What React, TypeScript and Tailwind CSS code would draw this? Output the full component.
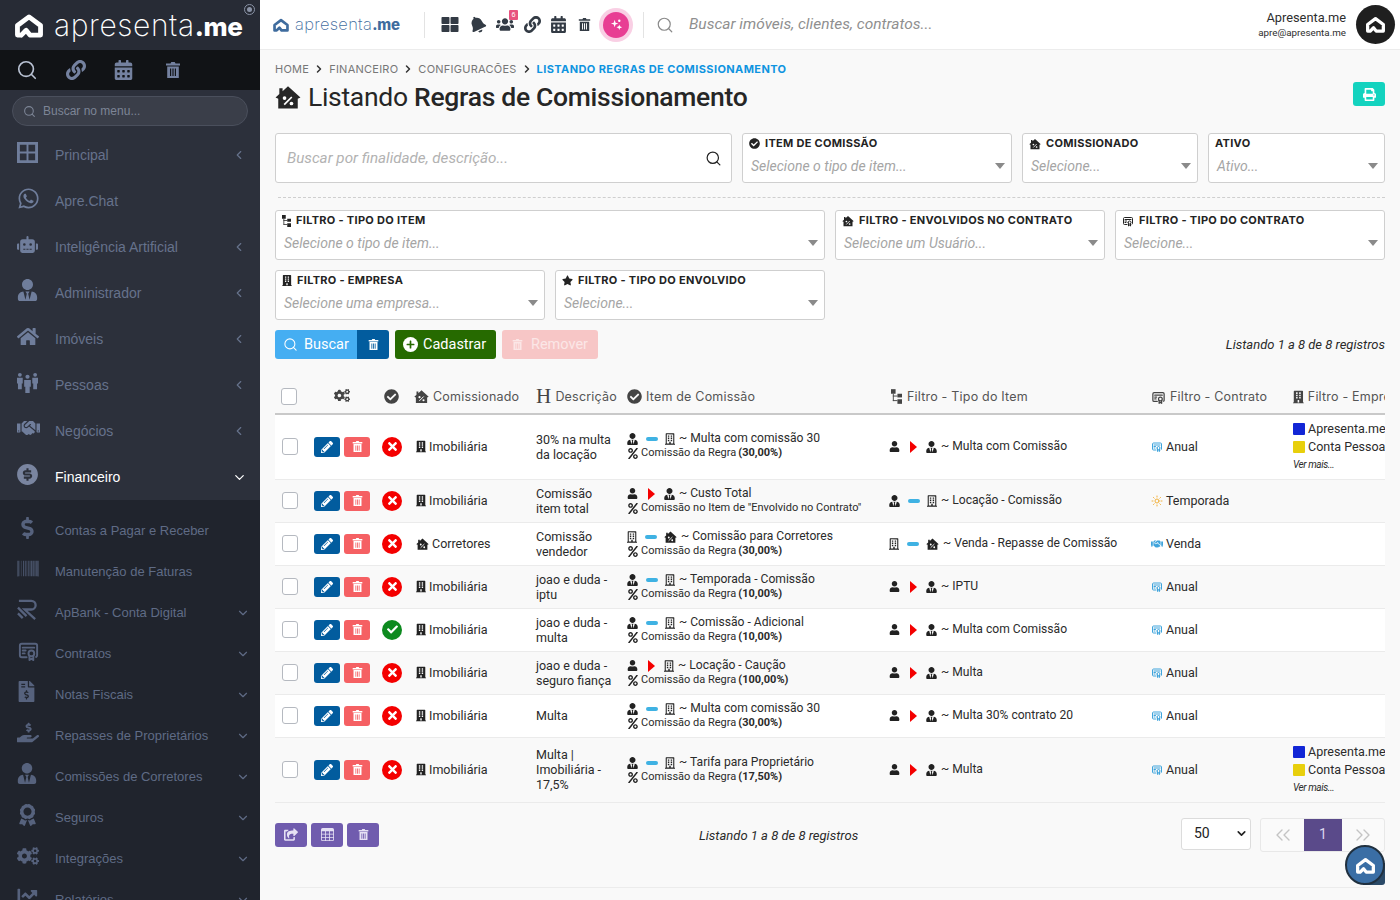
import type { ReactNode } from 'react';
import { ChevronDown, ChevronLeft, ChevronRight, ChevronsLeft, ChevronsRight, Search, Sun } from 'lucide-react';
import {
    FaAward, FaBarcode, FaBell, FaBuilding, FaCalendarAlt, FaChartLine, FaCheck, FaCheckCircle, FaCogs, FaDollarSign,
    FaFileInvoiceDollar, FaHandHoldingUsd, FaHandshake, FaHome, FaLink, FaPencilAlt, FaPercent, FaPlus, FaPrint, FaRegBuilding,
    FaRobot, FaShareSquare, FaStar, FaThLarge, FaTimes, FaUser, FaUsers, FaUserTie, FaWhatsapp,
} from 'react-icons/fa';
import { RiMoneyDollarCircleFill } from 'react-icons/ri';
import { TbCertificate } from 'react-icons/tb';
import { BsTable } from 'react-icons/bs';

const roboto = 'font-["Roboto",sans-serif]';
const mont = 'font-["Inter",sans-serif]';

function LogoMark({ className }: { className?: string }) {
    return (
        <svg viewBox="0 0 32 26" className={className} fill="none" stroke="currentColor" strokeWidth="5" strokeLinejoin="round" strokeLinecap="round">
            <path d="M7 23 H4 V13 L16 4 L28 13 V23 H17 L13 18 L8 23" />
        </svg>
    );
}

function Trash({ className }: { className?: string }) {
    return (
        <svg viewBox="0 0 16 18" className={className} fill="currentColor">
            <path d="M1 2.5h4.5L6.3 1h3.4l.8 1.5H15v2H1z" />
            <path fillRule="evenodd" d="M2.2 5.5h11.6V17H2.2zM5 7.5v7.5h1.2V7.5zM7.4 7.5v7.5h1.2V7.5zM9.8 7.5v7.5H11V7.5z" />
        </svg>
    );
}

function HousePercent({ className }: { className?: string }) {
    return (
        <svg viewBox="0 0 24 22" className={className}>
            <path fill="currentColor" d="M12 1 L23.5 11.5 L21 12.5 V21.5 H3 V12.5 L.5 11.5 L4 8.3 V3 H7 V5.6 Z" />
            <path stroke="#fff" strokeWidth="1.6" d="M8.5 18 L15.5 11" />
            <circle cx="8.8" cy="12" r="1.7" fill="#fff" />
            <circle cx="15.2" cy="17" r="1.7" fill="#fff" />
        </svg>
    );
}

function Hierarchy({ className }: { className?: string }) {
    return (
        <svg viewBox="0 0 12 16" className={className} fill="currentColor">
            <rect x="0" y="0" width="5" height="5" />
            <rect x="2" y="5" width="1" height="8" />
            <rect x="2" y="7" width="5" height="1" />
            <rect x="2" y="12" width="5" height="1" />
            <rect x="7" y="5" width="5" height="4" />
            <rect x="7" y="11" width="5" height="5" />
        </svg>
    );
}

function People({ className }: { className?: string }) {
    return (
        <svg viewBox="0 0 22 22" className={className} fill="currentColor">
            <circle cx="3" cy="3" r="2" />
            <path d="M0 6h6v6H5v6H1v-6H0z" />
            <circle cx="19" cy="3" r="2" />
            <path d="M16 6h6v6h-1v6h-4v-6h-1z" />
            <circle cx="11" cy="5" r="2.2" />
            <path d="M7.5 8.5h7v7h-1.2V22H8.7v-6.500H7.500z" />
        </svg>
    );
}

function RBank({ className }: { className?: string }) {
    return (
        <svg viewBox="0 0 22 22" className={className} fill="none" stroke="currentColor" strokeWidth="2.4">
            <path d="M2 2h13a4.500 4.500 0 0 1 0 9H8l11 10" />
            <path d="M1 9l9 9M1 15l5 5" />
        </svg>
    );
}

function WindowGrid({ className }: { className?: string }) {
    return (
        <svg viewBox="0 0 22 22" className={className} fill="currentColor">
            <path fillRule="evenodd" d="M0 0h22v22H0zM3 3v7h7V3zM12 3v7h7V3zM3 12v7h7v-7zM12 12v7h7v-7z" />
        </svg>
    );
}

function Caret() {
    return <span className="h-0 w-0 border-x-[5px] border-t-[6px] border-x-transparent border-t-[#8a8a8a]" />;
}

type NavItem = { label: string; icon: ReactNode; chevron?: boolean };

const mainNav: NavItem[] = [
    { label: 'Principal', icon: <WindowGrid className="h-[21px] w-[21px]" />, chevron: true },
    { label: 'Apre.Chat', icon: <FaWhatsapp className="h-[23px] w-[23px]" /> },
    { label: 'Inteligência Artificial', icon: <FaRobot className="h-[21px] w-[21px]" />, chevron: true },
    { label: 'Administrador', icon: <FaUserTie className="h-[22px] w-[21px]" />, chevron: true },
    { label: 'Imóveis', icon: <FaHome className="h-[21px] w-[22px]" />, chevron: true },
    { label: 'Pessoas', icon: <People className="h-[21px] w-[21px]" />, chevron: true },
    { label: 'Negócios', icon: <FaHandshake className="h-[22px] w-[23px]" />, chevron: true },
];

const subNav: NavItem[] = [
    { label: 'Contas a Pagar e Receber', icon: <FaDollarSign className="h-[22px] w-[21px]" /> },
    { label: 'Manutenção de Faturas', icon: <FaBarcode className="h-[21px] w-[22px]" /> },
    { label: 'ApBank - Conta Digital', icon: <RBank className="h-[21px] w-[21px]" />, chevron: true },
    { label: 'Contratos', icon: <TbCertificate className="h-[23px] w-[23px]" />, chevron: true },
    { label: 'Notas Fiscais', icon: <FaFileInvoiceDollar className="h-[21px] w-[19px]" />, chevron: true },
    { label: 'Repasses de Proprietários', icon: <FaHandHoldingUsd className="h-[21px] w-[22px]" />, chevron: true },
    { label: 'Comissões de Corretores', icon: <FaUserTie className="h-[21px] w-[20px]" />, chevron: true },
    { label: 'Seguros', icon: <FaAward className="h-[22px] w-[21px]" />, chevron: true },
    { label: 'Integrações', icon: <FaCogs className="h-[20px] w-[22px]" />, chevron: true },
    { label: 'Relatórios', icon: <FaChartLine className="h-[21px] w-[22px]" />, chevron: true },
];

function Sidebar() {
    return (
        <aside className='flex h-full w-[260px] shrink-0 flex-col overflow-hidden bg-[#2c303b] font-["Liberation_Sans",sans-serif]'>
            <div className="relative flex h-[50px] shrink-0 items-center bg-[#272b35] pl-[13px] text-white">
                <LogoMark className="h-[25px] w-[32px]" />
                <span className={`ml-[9px] leading-none ${mont}`}>
                    <span className="text-[30px] font-extralight tracking-[0.6px]">apresenta</span>
                    <span className="text-[26px] font-extrabold tracking-[-0.4px]">.me</span>
                </span>
                <span className="absolute right-[5px] top-[4px] flex h-[11px] w-[11px] items-center justify-center rounded-full border border-[#8a93a6]">
                    <span className="h-[5px] w-[5px] rounded-full bg-[#8a93a6]" />
                </span>
            </div>
            <div className="flex h-[40px] shrink-0 items-center gap-[28px] bg-[#111316] pl-[16px] text-[#74819f]">
                <Search className="h-[22px] w-[22px] text-[#b9c2d3]" strokeWidth={1.8} />
                <FaLink className="h-[20px] w-[20px]" />
                <FaCalendarAlt className="h-[20px] w-[19px]" />
                <Trash className="ml-[4px] h-[20px] w-[16px]" />
            </div>
            <div className="mt-[6px] flex h-[30px] shrink-0 items-center px-[12px]">
                <div className="flex h-full w-full items-center gap-[7px] rounded-full border border-[#4a4f5c] bg-[#3a3e49] pl-[10px] text-[12px] text-[#7d8596]">
                    <Search className="h-[13px] w-[13px]" />
                    Buscar no menu...
                </div>
            </div>
            <nav className="mt-[6px] text-[14px] text-[#66728c]">
                {mainNav.map((item) => (
                    <div key={item.label} className="flex h-[46px] items-center pl-[17px] pr-[14px]">
                        <span className="mb-[6px] flex w-[38px] justify-start text-[#6f7d9b]">{item.icon}</span>
                        <span className="flex-1">{item.label}</span>
                        {item.chevron && <ChevronLeft className="h-[14px] w-[14px]" />}
                    </div>
                ))}
                <div className="flex h-[46px] items-center pl-[17px] pr-[13px] text-white">
                    <span className="mb-[6px] flex w-[38px] text-[#7a85a0]">
                        <RiMoneyDollarCircleFill className="-ml-[2px] h-[25px] w-[25px]" />
                    </span>
                    <span className="flex-1">Financeiro</span>
                    <ChevronDown className="h-[15px] w-[15px]" />
                </div>
            </nav>
            <div className="flex-1 bg-[#20242d] pt-[10px] text-[13px] text-[#5f6b85]">
                {subNav.map((item) => (
                    <div key={item.label} className="flex h-[41px] items-center pl-[17px] pr-[10px]">
                        <span className="mb-[6px] flex w-[38px] text-[#56627d]">{item.icon}</span>
                        <span className="flex-1">{item.label}</span>
                        {item.chevron && <ChevronDown className="h-[14px] w-[14px]" />}
                    </div>
                ))}
            </div>
        </aside>
    );
}

function Topbar() {
    return (
        <header className="flex h-[50px] shrink-0 items-center border-b border-[#ececec] bg-white pl-[12px] pr-[5px]">
            <div className="flex w-[136px] items-center text-[#3f6c9e]">
                <LogoMark className="h-[14px] w-[18px]" />
                <span className={`ml-[5px] leading-none ${mont}`}>
                    <span className="text-[16.500px] font-extralight tracking-[0.3px]">apresenta</span>
                    <span className="text-[15px] font-extrabold tracking-[-0.2px]">.me</span>
                </span>
            </div>
            <div className="mx-[16px] h-[26px] w-px bg-[#e3e3e3]" />
            <div className="flex items-center gap-[10px] text-[#333b45]">
                <FaThLarge className="h-[17px] w-[18px]" />
                <FaBell className="h-[17px] w-[17px] -rotate-[25deg]" />
                <span className="relative">
                    <FaUsers className="h-[17px] w-[18px]" />
                    <span className="absolute -right-[4px] -top-[6px] h-[10px] w-[9px] rounded-[1px] bg-[#e8527f] text-center text-[7px] leading-[10px] text-white">6</span>
                </span>
                <FaLink className="h-[17px] w-[17px]" />
                <FaCalendarAlt className="h-[17px] w-[15px]" />
                <Trash className="ml-[2px] h-[17px] w-[13px]" />
                <span className="relative ml-[2px] flex h-[26px] w-[26px] items-center justify-center rounded-full bg-[#e83e93] shadow-[0_0_0_4px_rgba(232,62,147,0.25)]">
                    <svg viewBox="0 0 14 14" className="h-[13px] w-[13px]" fill="#fff">
                        <path d="M5 2 L6 5 L9 6 L6 7 L5 10 L4 7 L1 6 L4 5 Z" />
                        <path d="M10 7 L10.700 9 L13 10 L10.700 11 L10 13 L9.300 11 L7 10 L9.300 9 Z" />
                        <circle cx="10" cy="3" r="1.300" />
                    </svg>
                </span>
            </div>
            <div className="ml-[14px] mr-[12px] h-[26px] w-px bg-[#e3e3e3]" />
            <Search className="h-[18px] w-[18px] text-[#8a8a8a]" strokeWidth={1.6} />
            <span className={`ml-[15px] flex-1 text-[15.500px] italic text-[#8f8f8f] ${roboto}`}>Buscar imóveis, clientes, contratos...</span>
            <div className={`mr-[10px] flex flex-col items-end ${roboto} text-[#2e2e2e]`}>
                <span className="text-[12.800px] leading-[16px]">Apresenta.me</span>
                <span className="text-[9.800px] leading-[13px]">apre@apresenta.me</span>
            </div>
            <span className="flex h-[39px] w-[39px] items-center justify-center rounded-full bg-[#1f1f1f] text-white">
                <LogoMark className="h-[17px] w-[21px]" />
            </span>
        </header>
    );
}

function Breadcrumb() {
    return (
        <div className={`flex items-center gap-[4px] text-[11px] leading-none tracking-[0.25px] ${mont} text-[#777]`}>
            <span>HOME</span>
            <ChevronRight className="h-[14px] w-[12px] text-[#333]" strokeWidth={3} />
            <span>FINANCEIRO</span>
            <ChevronRight className="h-[14px] w-[12px] text-[#333]" strokeWidth={3} />
            <span>CONFIGURACÕES</span>
            <ChevronRight className="h-[14px] w-[12px] text-[#333]" strokeWidth={3} />
            <span className="font-bold tracking-[0.4px] text-[#0f94e0]">LISTANDO REGRAS DE COMISSIONAMENTO</span>
        </div>
    );
}

function SelectBox({ icon, label, placeholder, className }: { icon?: ReactNode; label: string; placeholder: string; className: string }) {
    return (
        <div className={`flex h-[50px] flex-col rounded-[3px] border border-[#cfcfcf] bg-white px-[6px] pt-[2px] ${className}`}>
            <div className={`flex h-[15px] items-center gap-[5px] text-[11px] font-bold leading-none tracking-[0.3px] text-[#232323] ${mont}`}>
                {icon}
                {label}
            </div>
            <div className="flex flex-1 items-center justify-between pb-[1px]">
                <span className={`pl-[2px] text-[14px] italic text-[#a5a5a5] ${roboto}`}>{placeholder}</span>
                <Caret />
            </div>
        </div>
    );
}

function Filters() {
    return (
        <div className="mt-[21px] flex flex-col">
            <div className="flex gap-[10px]">
                <div className="flex h-[50px] w-[457px] items-center justify-between rounded-[3px] border border-[#cfcfcf] bg-white pl-[11px] pr-[9px]">
                    <span className={`text-[15.200px] italic text-[#b2b2b2] ${roboto}`}>Buscar por finalidade, descrição...</span>
                    <Search className="h-[17px] w-[17px] text-[#222]" strokeWidth={1.7} />
                </div>
                <SelectBox className="w-[270px]" label="ITEM DE COMISSÃO" placeholder="Selecione o tipo de item..." icon={<FaCheckCircle className="h-[11px] w-[11px]" />} />
                <SelectBox className="w-[176px]" label="COMISSIONADO" placeholder="Selecione..." icon={<HousePercent className="h-[12px] w-[12px]" />} />
                <SelectBox className="w-[177px]" label="ATIVO" placeholder="Ativo..." />
            </div>
            <div className="ml-[3px] mt-[14px] border-t border-dashed border-[#cfcfcf]" />
            <div className="mt-[12px] flex gap-[10px]">
                <SelectBox className="w-[550px]" label="FILTRO - TIPO DO ITEM" placeholder="Selecione o tipo de item..." icon={<Hierarchy className="h-[12px] w-[9px]" />} />
                <SelectBox className="w-[270px]" label="FILTRO - ENVOLVIDOS NO CONTRATO" placeholder="Selecione um Usuário..." icon={<HousePercent className="h-[12px] w-[12px]" />} />
                <SelectBox className="w-[270px]" label="FILTRO - TIPO DO CONTRATO" placeholder="Selecione..." icon={<TbCertificate className="h-[12px] w-[12px]" />} />
            </div>
            <div className="mt-[10px] flex gap-[10px]">
                <SelectBox className="w-[270px]" label="FILTRO - EMPRESA" placeholder="Selecione uma empresa..." icon={<FaBuilding className="h-[11px] w-[10px]" />} />
                <SelectBox className="w-[270px]" label="FILTRO - TIPO DO ENVOLVIDO" placeholder="Selecione..." icon={<FaStar className="h-[11px] w-[11px]" />} />
            </div>
            <div className={`mt-[10px] flex h-[29px] items-center text-[14.500px] text-white ${roboto}`}>
                <div className="flex h-full w-[82px] items-center gap-[6px] rounded-l-[3px] bg-[#45aef2] pl-[8px]">
                    <Search className="h-[15px] w-[15px]" strokeWidth={1.7} />
                    Buscar
                </div>
                <div className="flex h-full w-[32px] items-center justify-center rounded-r-[3px] bg-[#025c9e]">
                    <Trash className="h-[13px] w-[11px]" />
                </div>
                <div className="ml-[6px] flex h-full w-[101px] items-center gap-[5px] rounded-[3px] bg-[#266a00] pl-[8px]">
                    <span className="flex h-[15px] w-[15px] items-center justify-center rounded-full bg-white text-[#266a00]">
                        <FaPlus className="h-[9px] w-[9px]" />
                    </span>
                    Cadastrar
                </div>
                <div className="ml-[6px] flex h-full w-[96px] items-center gap-[8px] rounded-[3px] bg-[#f7c6c6] pl-[10px] text-[#fbe6e6]">
                    <Trash className="h-[13px] w-[11px]" />
                    Remover
                </div>
                <span className="ml-auto text-[13px] italic text-[#2a2a2a]">Listando 1 a 8 de 8 registros</span>
            </div>
        </div>
    );
}

type EndIcon = 'user' | 'tie' | 'building' | 'house';
type Flow = { a: EndIcon; link: 'dash' | 'arrow'; b: EndIcon; text: string };

function EndGlyph({ kind }: { kind: EndIcon }) {
    if (kind === 'user') return <FaUser className="h-[11px] w-[11px] text-[#222]" />;
    if (kind === 'tie') return <FaUserTie className="h-[12px] w-[11px] text-[#222]" />;
    if (kind === 'building') return <FaRegBuilding className="h-[12px] w-[10px] text-[#222]" />;
    return <HousePercent className="h-[12px] w-[13px] text-[#222]" />;
}

function FlowLine({ flow }: { flow: Flow }) {
    return (
        <div className="flex items-center whitespace-nowrap text-[12.100px]">
            <EndGlyph kind={flow.a} />
            {flow.link === 'dash' ? (
                <span className="ml-[8px] mr-[7px] h-[4px] w-[12px] rounded-full bg-[#3fb2e3]" />
            ) : (
                <span className="ml-[10px] mr-[9px] h-0 w-0 border-y-[6px] border-l-[7px] border-y-transparent border-l-[#f40000]" />
            )}
            <EndGlyph kind={flow.b} />
            <span className="ml-[4px]">~ {flow.text}</span>
        </div>
    );
}

type Row = {
    ok?: boolean;
    company: 'imob' | 'corr';
    desc: string[];
    item: Flow;
    note: string;
    pct?: string;
    filter: Flow;
    contract: 'Anual' | 'Temporada' | 'Venda';
    companies?: boolean;
    height: string;
};

const tie = (text: string, b: EndIcon = 'building'): Flow => ({ a: 'tie', link: 'dash', b, text });
const userTie = (text: string): Flow => ({ a: 'user', link: 'arrow', b: 'tie', text });
const rule = 'Comissão da Regra';

const rows: Row[] = [
    { company: 'imob', desc: ['30% na multa', 'da locação'], item: tie('Multa com comissão 30'), note: rule, pct: '(30,00%)', filter: userTie('Multa com Comissão'), contract: 'Anual', companies: true, height: 'h-[65px]' },
    { company: 'imob', desc: ['Comissão', 'item total'], item: userTie('Custo Total'), note: 'Comissão no Item de "Envolvido no Contrato"', filter: tie('Locação - Comissão'), contract: 'Temporada', height: 'h-[43px]' },
    { company: 'corr', desc: ['Comissão', 'vendedor'], item: { a: 'building', link: 'dash', b: 'house', text: 'Comissão para Corretores' }, note: rule, pct: '(30,00%)', filter: { a: 'building', link: 'dash', b: 'house', text: 'Venda - Repasse de Comissão' }, contract: 'Venda', height: 'h-[43px]' },
    { company: 'imob', desc: ['joao e duda -', 'iptu'], item: tie('Temporada - Comissão'), note: rule, pct: '(10,00%)', filter: userTie('IPTU'), contract: 'Anual', height: 'h-[43px]' },
    { ok: true, company: 'imob', desc: ['joao e duda -', 'multa'], item: tie('Comissão - Adicional'), note: rule, pct: '(10,00%)', filter: userTie('Multa com Comissão'), contract: 'Anual', height: 'h-[43px]' },
    { company: 'imob', desc: ['joao e duda -', 'seguro fiança'], item: { a: 'user', link: 'arrow', b: 'building', text: 'Locação - Caução' }, note: rule, pct: '(100,00%)', filter: userTie('Multa'), contract: 'Anual', height: 'h-[43px]' },
    { company: 'imob', desc: ['Multa'], item: tie('Multa com comissão 30'), note: rule, pct: '(30,00%)', filter: userTie('Multa 30% contrato 20'), contract: 'Anual', height: 'h-[43px]' },
    { company: 'imob', desc: ['Multa |', 'Imobiliária -', '17,5%'], item: tie('Tarifa para Proprietário'), note: rule, pct: '(17,50%)', filter: userTie('Multa'), contract: 'Anual', companies: true, height: 'h-[65px]' },
];

function Checkbox() {
    return <span className="block h-[17px] w-[16px] rounded-[3px] border border-[#b5b9c0] bg-white" />;
}

function ContractCell({ kind }: { kind: Row['contract'] }) {
    return (
        <div className="flex items-center gap-[3px]">
            {kind === 'Anual' && <TbCertificate className="h-[13px] w-[12px] text-[#3fa4dc]" />}
            {kind === 'Temporada' && <Sun className="h-[12px] w-[12px] text-[#f2b13c]" />}
            {kind === 'Venda' && <FaHandshake className="h-[12px] w-[12px] text-[#3fa4dc]" />}
            {kind}
        </div>
    );
}

function HeaderCell({ icon, label }: { icon: ReactNode; label: string }) {
    return (
        <th className="p-0 text-left font-normal">
            <div className={`flex items-center gap-[4px] whitespace-nowrap text-[12.500px] tracking-[0.2px] text-[#555] ${mont}`}>
                {icon}
                {label}
            </div>
        </th>
    );
}

function RulesTable() {
    return (
        <div className="mt-[21px] overflow-hidden">
            <table className={`w-[1130px] table-fixed border-collapse text-[12.500px] leading-[15px] text-[#2b2b2b] ${roboto}`}>
                <colgroup>
                    <col className="w-[39px]" />
                    <col className="w-[67px]" />
                    <col className="w-[33px]" />
                    <col className="w-[122px]" />
                    <col className="w-[91px]" />
                    <col className="w-[262px]" />
                    <col className="w-[262px]" />
                    <col className="w-[142px]" />
                    <col className="w-[112px]" />
                </colgroup>
                <thead>
                    <tr className="h-[34px] border-b-2 border-[#c9c9c9]">
                        <th className="p-0 pl-[6px]"><Checkbox /></th>
                        <th className="p-0 pl-[20px] text-[#444]"><FaCogs className="mb-[3px] h-[13px] w-[16px]" /></th>
                        <th className="p-0 pl-[3px] text-[#444]"><FaCheckCircle className="h-[15px] w-[15px]" /></th>
                        <HeaderCell icon={<HousePercent className="h-[15px] w-[15px] text-[#444]" />} label="Comissionado" />
                        <HeaderCell icon={<span className='font-["Liberation_Serif",serif] text-[21px] leading-none text-[#444]'>H</span>} label="Descrição" />
                        <HeaderCell icon={<FaCheckCircle className="h-[15px] w-[15px] text-[#444]" />} label="Item de Comissão" />
                        <th className="p-0 pl-[2px] text-left font-normal">
                            <div className={`flex items-center gap-[5px] whitespace-nowrap text-[12.500px] tracking-[0.2px] text-[#555] ${mont}`}>
                                <Hierarchy className="h-[15px] w-[11px] text-[#444]" />
                                Filtro - Tipo do Item
                            </div>
                        </th>
                        <HeaderCell icon={<TbCertificate className="h-[16px] w-[15px] text-[#444]" />} label="Filtro - Contrato" />
                        <HeaderCell icon={<FaBuilding className="h-[14px] w-[12px] text-[#444]" />} label="Filtro - Empresa" />
                    </tr>
                </thead>
                <tbody>
                    {rows.map((row, index) => (
                        <tr key={index} className={`${row.height} border-b border-[#ebebeb] ${index % 2 === 0 ? 'bg-white' : 'bg-[#f9f9f9]'}`}>
                            <td className="p-0 pl-[7px]"><Checkbox /></td>
                            <td className="p-0">
                                <div className="flex gap-[4px]">
                                    <span className="flex h-[20px] w-[26px] items-center justify-center rounded-[3px] bg-[#025c9e] text-white">
                                        <FaPencilAlt className="h-[12px] w-[12px]" />
                                    </span>
                                    <span className="flex h-[20px] w-[26px] items-center justify-center rounded-[3px] bg-[#f56063] text-white">
                                        <Trash className="h-[13px] w-[11px]" />
                                    </span>
                                </div>
                            </td>
                            <td className="p-0 pl-[1px]">
                                <span className={`flex h-[20px] w-[20px] items-center justify-center rounded-full text-white ${row.ok ? 'bg-[#0d8a1f]' : 'bg-[#f40000]'}`}>
                                    {row.ok ? <FaCheck className="h-[11px] w-[11px]" /> : <FaTimes className="h-[13px] w-[13px]" />}
                                </span>
                            </td>
                            <td className="p-0">
                                <div className="flex items-center gap-[3px] pl-[2px]">
                                    {row.company === 'imob' ? <FaBuilding className="h-[13px] w-[10px] text-[#222]" /> : <HousePercent className="h-[12px] w-[13px] text-[#222]" />}
                                    {row.company === 'imob' ? 'Imobiliária' : 'Corretores'}
                                </div>
                            </td>
                            <td className="p-0">
                                {row.desc.map((line) => <div key={line}>{line}</div>)}
                            </td>
                            <td className={`p-0 ${row.companies && index === 0 ? 'pt-[16px] align-top' : ''}`}>
                                <FlowLine flow={row.item} />
                                <div className="flex items-center gap-[2px] whitespace-nowrap text-[11px] leading-[14px]">
                                    <FaPercent className="h-[11px] w-[12px] text-[#222]" />
                                    <span>{row.note}</span>
                                    {row.pct && <b className="font-bold">{row.pct}</b>}
                                </div>
                            </td>
                            <td className="p-0"><FlowLine flow={row.filter} /></td>
                            <td className="p-0"><ContractCell kind={row.contract} /></td>
                            <td className="p-0">
                                {row.companies && (
                                    <div className="flex flex-col gap-[3px] whitespace-nowrap">
                                        <div className="flex items-center gap-[3px]"><span className="h-[12px] w-[12px] rounded-[1px] bg-[#1226d6]" />Apresenta.me</div>
                                        <div className="flex items-center gap-[3px]"><span className="h-[12px] w-[12px] rounded-[1px] bg-[#e8cf0c]" />Conta Pessoal</div>
                                        <div className="text-[10px] italic tracking-[-0.4px]">Ver mais...</div>
                                    </div>
                                )}
                            </td>
                        </tr>
                    ))}
                </tbody>
            </table>
        </div>
    );
}

function Footer() {
    return (
        <div className={`mt-[15px] flex items-start ${roboto}`}>
            <div className="mt-[5px] flex w-[424px] gap-[4px] text-[#e6e1f4]">
                <span className="flex h-[24px] w-[32px] items-center justify-center rounded-[3px] bg-[#705cae]"><FaShareSquare className="h-[13px] w-[14px]" /></span>
                <span className="flex h-[24px] w-[32px] items-center justify-center rounded-[3px] bg-[#705cae]"><BsTable className="h-[13px] w-[13px]" /></span>
                <span className="flex h-[24px] w-[32px] items-center justify-center rounded-[3px] bg-[#705cae]"><Trash className="h-[13px] w-[11px]" /></span>
            </div>
            <span className="mt-[8px] text-[13px] italic text-[#2a2a2a]">Listando 1 a 8 de 8 registros</span>
            <div className="ml-auto flex h-[32px] w-[70px] items-center justify-between rounded-[3px] border border-[#dcdcdc] bg-white pl-[12px] pr-[2px] text-[14px] text-[#222]">
                50
                <ChevronDown className="h-[13px] w-[13px]" strokeWidth={3} />
            </div>
            <div className="ml-[9px] flex h-[34px] w-[125px] items-center rounded-[3px] border border-[#e8e8e8] bg-[#fafafa] text-[#c4c4c4]">
                <span className="flex w-[43px] justify-center"><ChevronsLeft className="h-[24px] w-[24px]" strokeWidth={1.4} /></span>
                <span className="flex h-full w-[38px] items-center justify-center bg-[#5a4a8a] text-[14px] text-[#dcd6ee]">1</span>
                <span className="flex w-[42px] justify-center"><ChevronsRight className="h-[24px] w-[24px]" strokeWidth={1.4} /></span>
            </div>
        </div>
    );
}

export default function App() {
    return (
        <div className="relative flex h-screen w-full overflow-hidden bg-[#f9f9f9]">
            <Sidebar />
            <main className="relative flex min-w-0 flex-1 flex-col">
                <Topbar />
                <div className="flex-1 px-[15px] pt-[12px]">
                    <Breadcrumb />
                    <div className="mt-[6px] flex items-start justify-between">
                        <div className={`flex h-[30px] items-center gap-[7px] text-[26.500px] leading-none tracking-[-0.3px] text-[#262626] ${roboto}`}>
                            <HousePercent className="h-[24px] w-[26px] text-[#262626]" />
                            <span>Listando <span className="font-medium">Regras de Comissionamento</span></span>
                        </div>
                        <span className="flex h-[24px] w-[32px] items-center justify-center rounded-[3px] bg-[#14d3bf] text-white">
                            <FaPrint className="h-[13px] w-[13px]" />
                        </span>
                    </div>
                    <Filters />
                    <RulesTable />
                    <Footer />
                    <div className="mx-[15px] mt-[35px] border-t border-[#ececec]" />
                </div>
                <div className="absolute bottom-[15px] right-[15px] h-[22px] w-[22px] rounded-br-[3px] bg-[#2a4a68]" />
                <span className="absolute bottom-[15px] right-[15px] flex h-[40px] w-[40px] items-center justify-center rounded-full border-2 border-[#20303f] bg-[#3a6ea5] text-white">
                    <LogoMark className="h-[17px] w-[21px]" />
                </span>
            </main>
        </div>
    );
}
